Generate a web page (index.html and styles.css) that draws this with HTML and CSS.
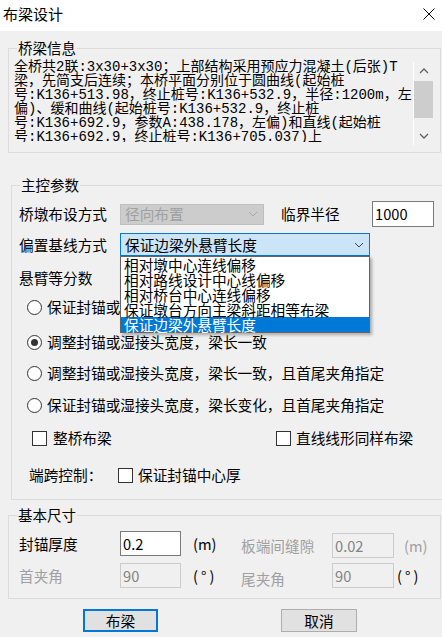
FILE: index.html
```html
<!DOCTYPE html>
<html>
  <head>
    <title>布梁设计</title>
    <meta charset="UTF-8">
    <link rel="stylesheet" href="styles.css">
  </head>
  <body>
    <div id="dialog">
      <div class="titlebar">
        <span class="title">布梁设计</span>
        <svg class="close" width="12" height="12" viewBox="0 0 12 12"><path d="M0.5 0.5 L11.5 11.5 M11.5 0.5 L0.5 11.5" stroke="#000" stroke-width="1" fill="none"/></svg>
      </div>

      <fieldset class="group info">
        <legend>桥梁信息</legend>
        <div class="infobody">
          <div class="infotext">全桥共2联:3x30+3x30；上部结构采用预应力混凝土(后张)T
梁，先简支后连续；本桥平面分别位于圆曲线(起始桩
号:K136+513.98，终止桩号:K136+532.9，半径:1200m，左
偏)、缓和曲线(起始桩号:K136+532.9，终止桩
号:K136+692.9，参数A:438.178，左偏)和直线(起始桩
号:K136+692.9，终止桩号:K136+705.037)上</div>
          <div class="scrollbar">
            <div class="sb-btn"><svg width="10" height="6" viewBox="0 0 10 6"><path d="M1 5 L5 1 L9 5" stroke="#606060" stroke-width="1.3" fill="none"/></svg></div>
            <div class="sb-thumb"></div>
            <div class="sb-space"></div>
            <div class="sb-btn"><svg width="10" height="6" viewBox="0 0 10 6"><path d="M1 1 L5 5 L9 1" stroke="#606060" stroke-width="1.3" fill="none"/></svg></div>
          </div>
        </div>
      </fieldset>

      <fieldset class="group main">
        <legend>主控参数</legend>
        <div class="row row1">
          <span class="lbl">桥墩布设方式</span>
          <div class="combo disabled">
            <span>径向布置</span>
            <svg width="10" height="6" viewBox="0 0 10 6"><path d="M1 1 L5 5 L9 1" stroke="#a6a6a6" stroke-width="1" fill="none"/></svg>
          </div>
          <span class="lbl2">临界半径</span>
          <div class="edit radius">1000</div>
        </div>
        <div class="row row2">
          <span class="lbl">偏置基线方式</span>
          <div class="combo open">
            <span>保证边梁外悬臂长度</span>
            <svg width="10" height="6" viewBox="0 0 10 6"><path d="M1 1 L5 5 L9 1" stroke="#444" stroke-width="1" fill="none"/></svg>
            <ul class="droplist">
              <li>相对墩中心连线偏移</li>
              <li>相对路线设计中心线偏移</li>
              <li>相对桥台中心连线偏移</li>
              <li>保证墩台方向主梁斜距相等布梁</li>
              <li class="sel">保证边梁外悬臂长度</li>
            </ul>
          </div>
        </div>
        <div class="row row3">
          <span class="lbl">悬臂等分数</span>
        </div>
        <div class="radio r1"><span class="dot"></span>保证封锚或湿接头宽度，梁长变化</div>
        <div class="radio r2"><span class="dot on"></span>调整封锚或湿接头宽度，梁长一致</div>
        <div class="radio r3"><span class="dot"></span>调整封锚或湿接头宽度，梁长一致，且首尾夹角指定</div>
        <div class="radio r4"><span class="dot"></span>保证封锚或湿接头宽度，梁长变化，且首尾夹角指定</div>
        <div class="checks">
          <div class="check first"><span class="box"></span>整桥布梁</div>
          <div class="check"><span class="box"></span>直线线形同样布梁</div>
        </div>
        <div class="endrow">
          <span class="endlbl">端跨控制：</span>
          <div class="check"><span class="box"></span>保证封锚中心厚</div>
        </div>
      </fieldset>

      <fieldset class="group size">
        <legend>基本尺寸</legend>
        <div class="sizerow">
          <span class="slbl">封锚厚度</span>
          <div class="edit">0.2</div>
          <span class="unit">(m)</span>
          <span class="slbl right grey">板端间缝隙</span>
          <div class="edit off right">0.02</div>
          <span class="unit right grey far">(m)</span>
        </div>
        <div class="sizerow">
          <span class="slbl grey">首夹角</span>
          <div class="edit off">90</div>
          <span class="unit deg">(°)</span>
          <span class="slbl grey low">尾夹角</span>
          <div class="edit off">90</div>
          <span class="unit deg">(°)</span>
        </div>
      </fieldset>

      <div class="buttons">
        <button type="button" class="btn default">布梁</button>
        <button type="button" class="btn">取消</button>
      </div>
    </div>
  </body>
</html>
```

FILE: styles.css
```css
body
{
  margin: 0;
  background-color: #f0f0f0;
  font-family: "Noto Sans CJK SC", sans-serif;
  font-size: 14.67px;
  color: #000000;
}
#dialog
{
  width: 442px;
  height: 637px;
  overflow: hidden;
  background-color: #f0f0f0;
}
.titlebar
{
  height: 31px;
  background-color: #ffffff;
  display: flex;
  justify-content: space-between;
  align-items: flex-start;
}
.title
{
  font-size: 15px;
  line-height: 16px;
  margin: 6px 0 0 3px;
}
.close {margin: 8px 7px 0 0;}

/* group boxes */
.group
{
  box-sizing: border-box;
  border: 1px solid #dcdcdc;
  padding: 0;
  min-width: 0;
}
.group legend
{
  font-size: 14.5px;
  line-height: 18px;
  padding: 0 1px;
  margin-left: 8px;
}
.info
{
  margin: 8px 0 0 8px;
  width: 433px;
  height: 114px;
}
.infobody
{
  display: flex;
  align-items: flex-start;
  margin-left: 5px;
  height: 88px;
}
.infotext
{
  width: 399px;
  height: 85px;
  overflow: hidden;
  white-space: pre;
  font-family: "Liberation Mono", "Noto Sans CJK SC", monospace;
  font-size: 14px;
  line-height: 13.9px;
  padding-top: 4px;
  box-sizing: border-box;
}
.scrollbar
{
  width: 20px;
  height: 83px;
  margin-top: 5px;
  border-left: 1px solid #ffffff;
  box-sizing: border-box;
  display: flex;
  flex-direction: column;
}
.sb-btn
{
  height: 18px;
  display: flex;
  align-items: center;
  justify-content: center;
}
.sb-thumb
{
  margin-top: 1px;
  height: 37px;
  background-color: #cdcdcd;
}
.sb-space {flex: 1;}

.main
{
  margin: 23px 0 0 11px;
  width: 440px;
  height: 324px;
  position: relative;
}
.row
{
  display: flex;
  align-items: center;
  padding-left: 7px;
}
.lbl {width: 101px; line-height: 18px;}
.row1 {margin-top: 7px; height: 26px;}
.row2 {margin-top: 6px; height: 23px;}
.row3 {margin-top: 12px; height: 20px;}
.combo
{
  box-sizing: border-box;
  border: 1px solid #bfbfbf;
  display: flex;
  align-items: center;
  justify-content: space-between;
  padding: 0 5px 0 4px;
  line-height: 18px;
}
.combo.disabled
{
  width: 144px;
  height: 21px;
  background-color: #cccccc;
  color: #a0a0a0;
}
.combo.open
{
  width: 250px;
  height: 23px;
  background-color: #cce4f7;
  border-color: #0078d7;
  position: relative;
}
.lbl2 {margin-left: 17px; width: 91px; line-height: 18px;}
.edit
{
  box-sizing: border-box;
  background-color: #ffffff;
  border: 1px solid #7a7a7a;
  padding-left: 2px;
  line-height: 18px;
  display: flex;
  align-items: center;
}
.radius {width: 62px; height: 26px;}
.droplist
{
  position: absolute;
  top: calc(100% + 1px);
  left: -1px;
  width: 250px;
  box-sizing: border-box;
  margin: 0;
  padding: 0;
  list-style: none;
  background-color: #ffffff;
  border: 1px solid #646464;
  box-shadow: 2px 2px 3px rgba(0, 0, 0, 0.3);
  z-index: 2;
}
.droplist li
{
  height: 15px;
  line-height: 15px;
  padding-left: 3px;
  white-space: nowrap;
}
.droplist li.sel
{
  background-color: #0078d7;
  color: #ffffff;
}

.radio
{
  display: flex;
  align-items: center;
  height: 20px;
  padding-left: 15px;
  white-space: nowrap;
  line-height: 18px;
}
.r1 {margin-top: 9px;}
.r2 {margin-top: 15px;}
.r3 {margin-top: 11px;}
.r4 {margin-top: 12px;}
.dot
{
  width: 15px;
  height: 15px;
  box-sizing: border-box;
  border: 1px solid #333333;
  border-radius: 50%;
  background-color: #ffffff;
  margin-right: 5px;
  display: flex;
  align-items: center;
  justify-content: center;
}
.dot.on::after
{
  content: "";
  width: 7px;
  height: 7px;
  border-radius: 50%;
  background-color: #333333;
}
.checks
{
  display: flex;
  margin-top: 13px;
  height: 20px;
  padding-left: 20px;
}
.check
{
  display: flex;
  align-items: center;
  line-height: 18px;
  white-space: nowrap;
}
.check.first {width: 244px;}
.box
{
  width: 15px;
  height: 15px;
  box-sizing: border-box;
  border: 1px solid #333333;
  background-color: #ffffff;
  margin-right: 5px;
}
.check.first .box {margin-right: 6px;}
.endrow
{
  display: flex;
  align-items: center;
  margin-top: 17px;
  height: 20px;
  padding-left: 17px;
}
.endlbl {width: 89px; line-height: 18px;}

.size
{
  margin: 6px 0 0 8px;
  width: 433px;
  height: 93px;
}
.sizerow
{
  display: grid;
  grid-template-columns: 101px 61px 60px 91px 62px 1fr;
  align-items: center;
  padding-left: 10px;
  height: 25px;
  margin-top: 5px;
}
.sizerow + .sizerow {margin-top: 9px;}
.slbl {line-height: 18px;}
.sizerow .edit {height: 25px;}
.sizerow .edit.off
{
  background-color: #f0f0f0;
  border-color: #cccccc;
  color: #838383;
}
.unit {padding-left: 12px; line-height: 18px;}
.unit:last-child {padding-left: 3px;}
.unit.far {padding-left: 10px;}
.unit.deg {letter-spacing: 3px;}
.grey {color: #a0a0a0;}
.right {margin-top: 4px;}
.low {margin-top: 6px;}

.buttons
{
  display: flex;
  gap: 123px;
  padding-left: 83px;
  margin-top: 10px;
}
.btn
{
  box-sizing: border-box;
  height: 23px;
  width: 76px;
  background-color: #e1e1e1;
  border: 1px solid #adadad;
  font-family: "Noto Sans CJK SC", sans-serif;
  font-size: 14.67px;
  line-height: 18px;
  padding: 0;
  color: #000000;
}
.btn.default
{
  width: 75px;
  border: 2px solid #0078d7;
}
```
